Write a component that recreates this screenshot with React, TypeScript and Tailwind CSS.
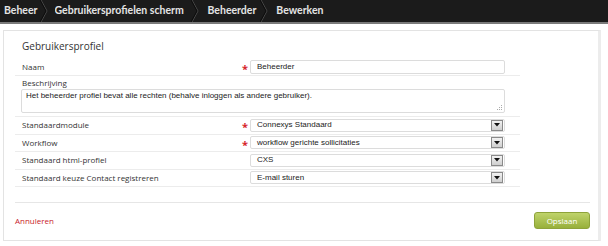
import React from "react";

const labelFont = { fontFamily: '"Open Sans", "DejaVu Sans", sans-serif' };
const inputFont = { fontFamily: '"Liberation Sans", Arial, sans-serif' };

function Chevron() {
  return (
    <svg width="8" height="22" viewBox="0 0 8 22" className="shrink-0">
      <polyline points="1,0 7,11 1,22" fill="none" stroke="#4a4a4a" strokeWidth="1" />
      <polyline points="0,0 6,11 0,22" fill="none" stroke="#0c0c0c" strokeWidth="1" />
    </svg>
  );
}

function Required({ on }: { on?: boolean }) {
  return (
    <div className="w-[8px] shrink-0 text-[11px] font-bold leading-none text-[#d6262b] pt-[3px]">
      {on ? "*" : ""}
    </div>
  );
}

function SelectBox({ value }: { value: string }) {
  return (
    <div className="flex h-[13px] w-[255px] items-center justify-between rounded-[2px] border border-[#dcdcdc] bg-white pl-[6px] pr-[1px]">
      <span className="text-[8px] text-[#222]" style={inputFont}>
        {value}
      </span>
      <div className="flex h-[11px] w-[12px] items-center justify-center border border-[#8a8a8a] bg-gradient-to-b from-[#f2f2f2] to-[#cfcfcf]">
        <svg width="6" height="4" viewBox="0 0 6 4">
          <polygon points="0,0 6,0 3,3.5" fill="#111" />
        </svg>
      </div>
    </div>
  );
}

function SelectRow({ label, value, required }: { label: string; value: string; required?: boolean }) {
  return (
    <div className="flex h-[17.5px] items-center border-b border-[#ececec] pl-[7px]">
      <div className="w-[220px] shrink-0 text-[8px] text-[#333]" style={labelFont}>
        {label}
      </div>
      <Required on={required} />
      <SelectBox value={value} />
    </div>
  );
}

export default function App() {
  return (
    <div className="h-[246px] w-[608px] overflow-hidden bg-white">
      {/* breadcrumb bar */}
      <div
        className="flex h-[24px] items-start border-b-2 border-[#7a7a7a] bg-[#1b1b1b] text-[10.5px] font-bold text-[#e4e4e4]"
        style={{ fontFamily: 'Lato, "Open Sans", sans-serif' }}
      >
        <div className="flex h-[22px] items-center pl-[4px] pr-[2px]">Beheer</div>
        <Chevron />
        <div className="flex h-[22px] items-center pl-[7px] pr-[5px]">
          <span className="block w-[131px] overflow-hidden whitespace-nowrap">Gebruikersprofielen scherm</span>
        </div>
        <Chevron />
        <div className="flex h-[22px] items-center pl-[9px] pr-[4px]">Beheerder</div>
        <Chevron />
        <div className="flex h-[22px] items-center pl-[8px]">Bewerken</div>
      </div>

      {/* card */}
      <div className="ml-[3px] mt-[6px] flex h-[211px] w-[598px] flex-col border border-[#e3e3e3] border-r-[3px] border-r-[#ececec] px-[11px]">
        <div className="w-[505px]">
          <div className="pl-[7px] pt-[8px] pb-[4px] text-[10px] text-[#333]" style={labelFont}>
            Gebruikersprofiel
          </div>

          <div className="flex h-[18px] items-center border-b border-[#ececec] pl-[7px]">
            <div className="w-[220px] shrink-0 text-[8px] text-[#333]" style={labelFont}>
              Naam
            </div>
            <Required on />
            <div className="flex h-[14px] w-[255px] items-center rounded-[2px] border border-[#dcdcdc] bg-white pl-[6px] text-[8px] text-[#222]" style={inputFont}>
              Beheerder
            </div>
          </div>

          <div className="border-b border-[#ececec] pb-[3px] pl-[6px]">
            <div className="pl-[1px] pt-[1px] text-[8px] leading-[12px] text-[#333]" style={labelFont}>
              Beschrijving
            </div>
            <div className="relative h-[24px] w-[484px] rounded-[2px] border border-[#dcdcdc] bg-white pl-[4px] pt-[1px] text-[8px] leading-[10px] text-[#222]" style={inputFont}>
              Het beheerder profiel bevat alle rechten (behalve inloggen als andere gebruiker).
              <svg width="6" height="6" viewBox="0 0 6 6" className="absolute bottom-[1px] right-[1px]">
                <rect x="4" y="0" width="1" height="1" fill="#aaa" />
                <rect x="2" y="2" width="1" height="1" fill="#aaa" />
                <rect x="4" y="2" width="1" height="1" fill="#aaa" />
                <rect x="0" y="4" width="1" height="1" fill="#aaa" />
                <rect x="2" y="4" width="1" height="1" fill="#aaa" />
                <rect x="4" y="4" width="1" height="1" fill="#aaa" />
              </svg>
            </div>
          </div>

          <SelectRow label="Standaardmodule" value="Connexys Standaard" required />
          <SelectRow label="Workflow" value="workflow gerichte sollicitaties" required />
          <SelectRow label="Standaard html-profiel" value="CXS" />
          <SelectRow label="Standaard keuze Contact registreren" value="E-mail sturen" />
        </div>

        <div className="mt-[15px] flex w-[575px] items-center justify-between border-t border-[#e6e6e6] pt-[9px]">
          <span className="text-[8px] text-[#c8202a]" style={labelFont}>
            Annuleren
          </span>
          <button
            className="flex h-[17px] w-[56px] items-center justify-center rounded-[3px] border border-[#8ea33a] bg-gradient-to-b from-[#bfd36a] to-[#98b03a] text-[8px] text-white"
            style={labelFont}
          >
            Opslaan
          </button>
        </div>
      </div>
    </div>
  );
}
